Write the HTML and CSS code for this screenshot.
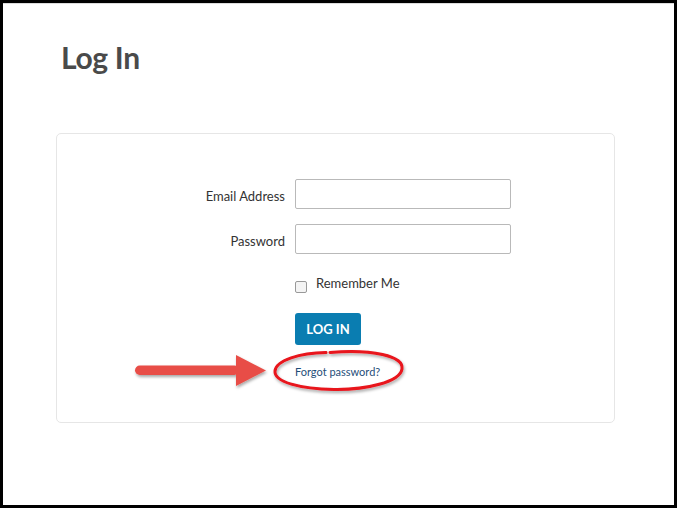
FILE: index.html
```html
<!DOCTYPE html>
<html lang="en">
<head>
    <meta charset="UTF-8">
    <meta name="viewport" content="width=device-width, initial-scale=1.0">
    <title>Log In</title>
    <link rel="stylesheet" href="styles.css">
</head>
<body>
    <div class="frame">
        <h1>Log In</h1>

        <div class="card">
            <div class="form-row">
                <label for="email">Email Address</label>
                <input type="text" id="email">
            </div>
            <div class="form-row">
                <label for="password">Password</label>
                <input type="password" id="password">
            </div>
            <div class="form-row">
                <span></span>
                <div class="remember">
                    <span class="check"></span>
                    <span>Remember Me</span>
                </div>
            </div>
            <div class="form-row">
                <span></span>
                <button class="btn">LOG IN</button>
            </div>
            <div class="form-row">
                <span></span>
                <a class="forgot" href="#">Forgot password?</a>
            </div>
        </div>
    </div>

    <!-- annotation drawn over the screenshot -->
    <svg class="annotation" width="677" height="508" viewBox="0 0 677 508">
        <defs>
            <filter id="shade" x="-20%" y="-40%" width="140%" height="180%">
                <feDropShadow dx="1" dy="2" stdDeviation="1.5" flood-color="#000" flood-opacity="0.35"/>
            </filter>
        </defs>
        <g filter="url(#shade)" fill="#e84d47">
            <rect x="135" y="365.5" width="104" height="9.5" rx="4.75"/>
            <polygon points="236,355 266,370.5 236,386"/>
        </g>
        <path filter="url(#shade)" d="M330 352.5 C 372 349, 404 356, 402 369 C 400 382, 366 390, 334 389.5 C 300 389, 274 382, 275 371 C 276 360, 300 353, 326 352.5"
              fill="none" stroke="#e8131b" stroke-width="3" stroke-linecap="round"/>
    </svg>
</body>
</html>
```

FILE: styles.css
```css
html, body {
    margin: 0;
    padding: 0;
}
body {
    position: relative;
    width: 677px;
    height: 508px;
    font-family: Lato, 'Open Sans', Arial, sans-serif;
    color: #333;
    background: #fff;
}
.frame {
    box-sizing: border-box;
    height: 508px;
    border: 3px solid #000;
    box-shadow: inset 0 1px 0 #dcdcdc;
    padding: 34px 0 0 53px;
}
h1 {
    margin: 0 0 56px 5px;
    font-size: 30px;
    font-weight: 700;
    line-height: 40px;
    color: #4a4a4a;
    letter-spacing: -0.3px;
}
.card {
    box-sizing: border-box;
    width: 559px;
    height: 290px;
    border: 1px solid #e6e6e6;
    border-radius: 5px;
    padding-top: 45px;
}
.form-row {
    display: grid;
    grid-template-columns: 228px 216px;
    column-gap: 10px;
    align-items: center;
    margin-bottom: 15px;
}
.form-row label {
    text-align: right;
    font-size: 13px;
    color: #333;
    padding-top: 3px;
}
.form-row input {
    box-sizing: border-box;
    height: 30px;
    width: 216px;
    border: 1px solid #b9b9b9;
    border-radius: 2px;
    margin: 0;
}
.remember {
    display: flex;
    align-items: flex-start;
    gap: 9px;
    font-size: 13px;
    color: #333;
    margin-top: 6px;
    height: 20px;
}
.check {
    box-sizing: border-box;
    width: 12px;
    height: 12px;
    margin-top: 6px;
    border: 1px solid #999;
    border-radius: 2px;
    background: #f4f4f4;
}
.btn {
    justify-self: start;
    width: 66px;
    height: 32px;
    margin-top: 3px;
    border: 0;
    border-radius: 3px;
    background-color: #0a7db1;
    color: #fff;
    font-family: Lato, 'Open Sans', Arial, sans-serif;
    font-size: 13px;
    font-weight: 700;
    padding: 0;
}
.forgot {
    margin-top: 5px;
    font-size: 11px;
    color: #1f4e79;
    text-decoration: none;
}
.annotation {
    position: absolute;
    top: 0;
    left: 0;
    pointer-events: none;
}
```
